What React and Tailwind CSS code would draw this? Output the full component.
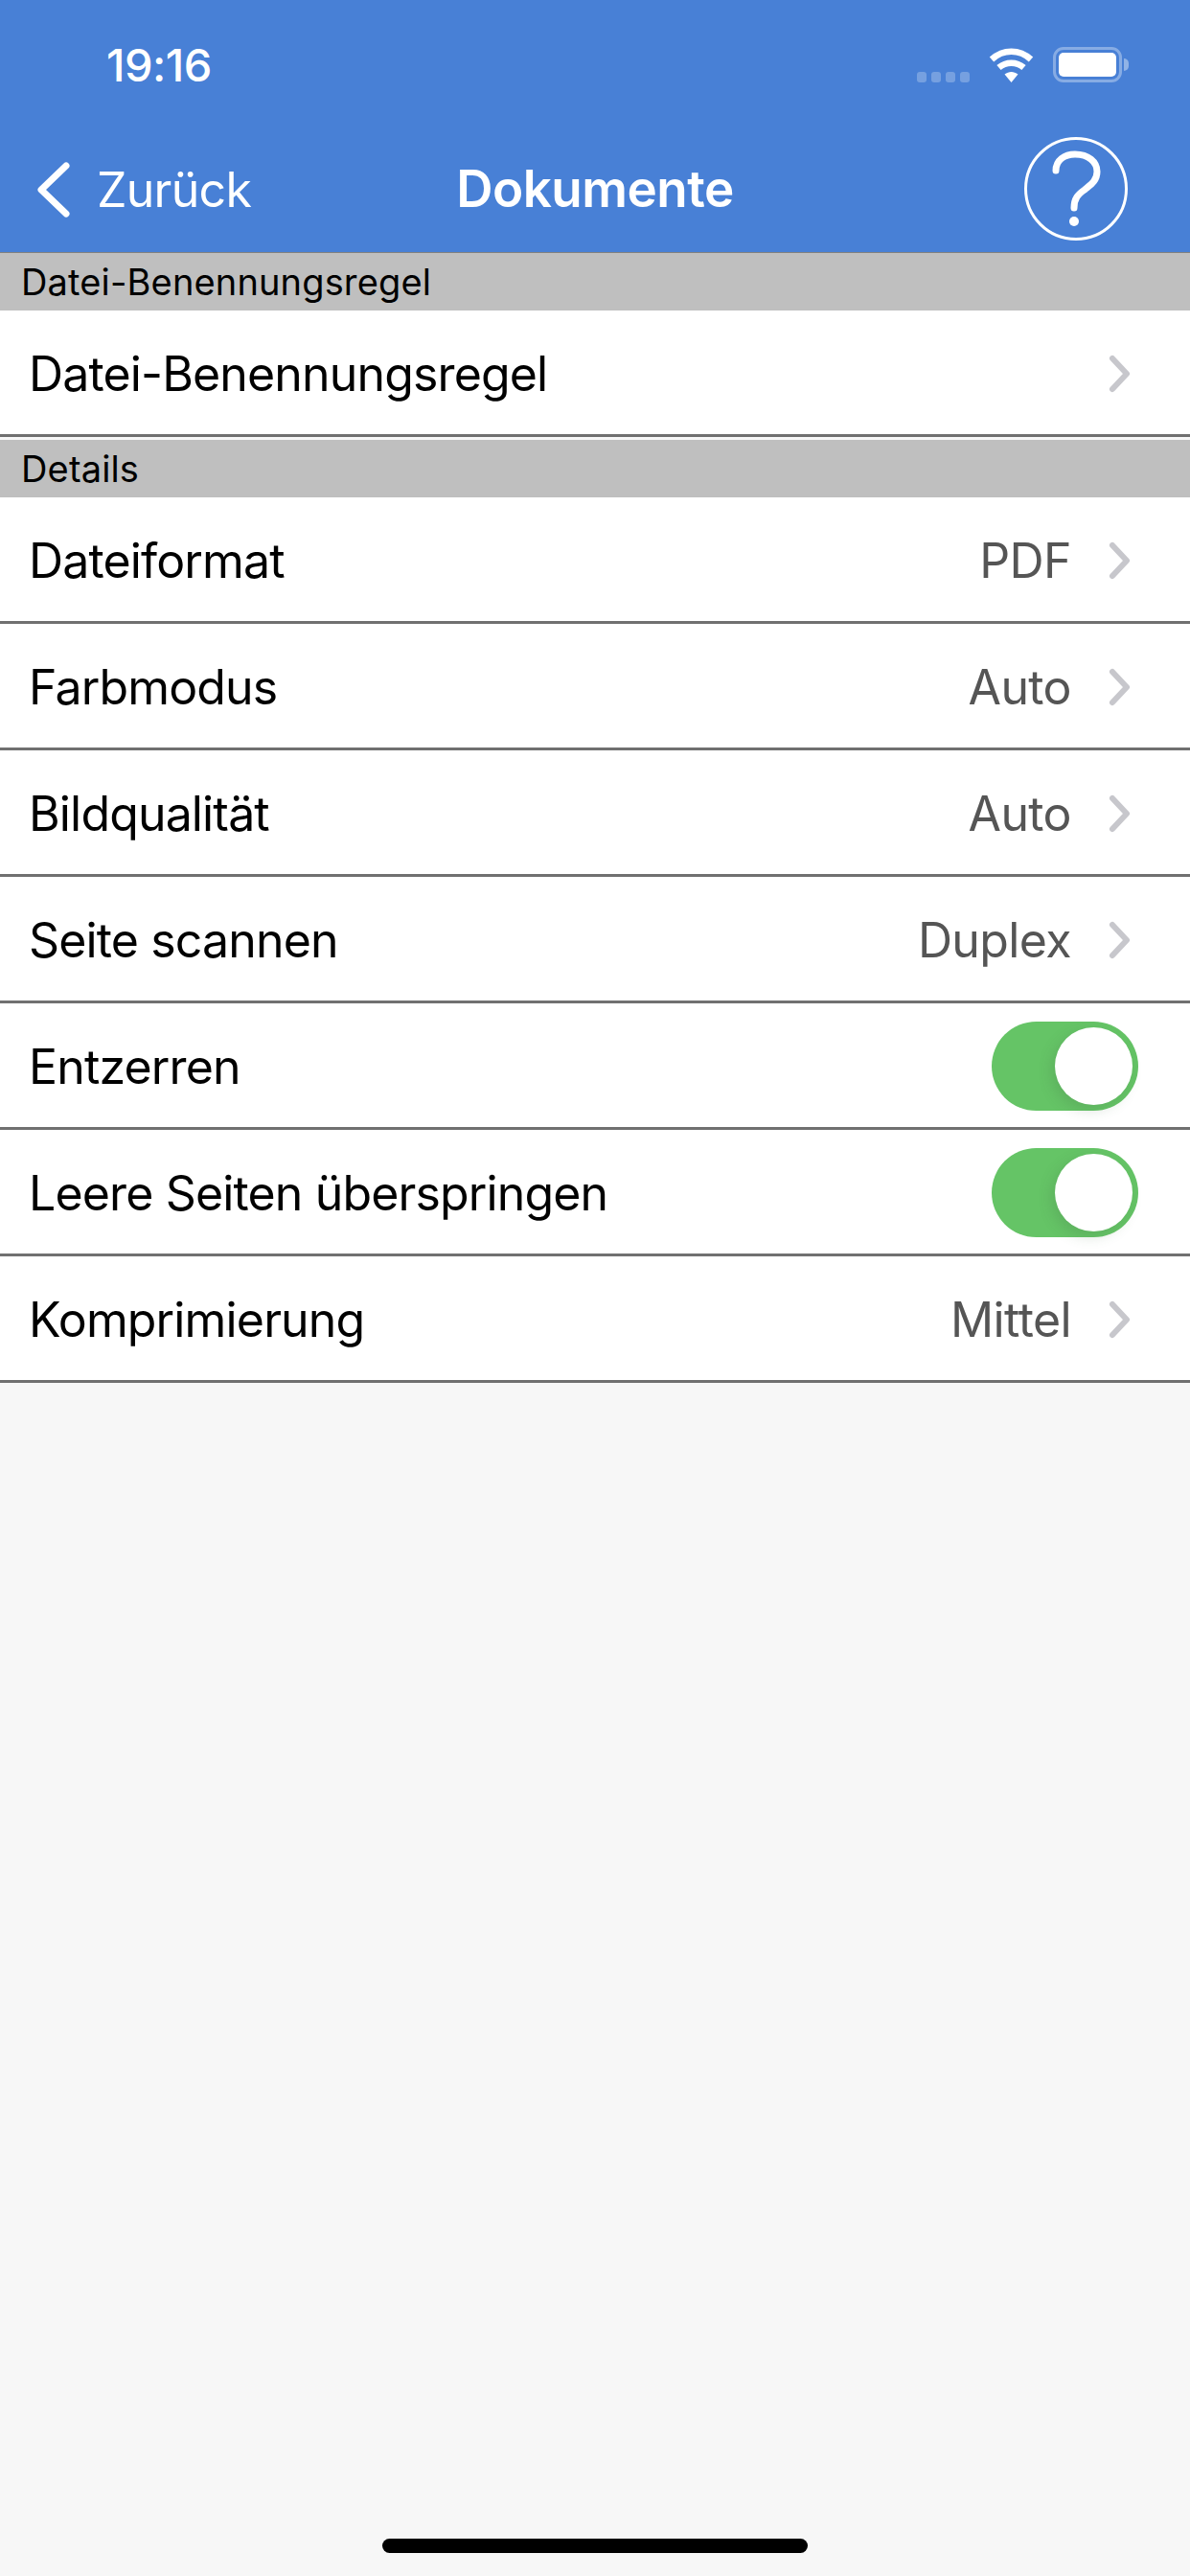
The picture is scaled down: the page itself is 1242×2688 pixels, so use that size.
const font = { fontFamily: 'Inter, "Noto Sans", sans-serif' };

const rows = [
  { label: 'Dateiformat', value: 'PDF' },
  { label: 'Farbmodus', value: 'Auto' },
  { label: 'Bildqualität', value: 'Auto' },
  { label: 'Seite scannen', value: 'Duplex' },
  { label: 'Entzerren', toggle: true },
  { label: 'Leere Seiten überspringen', toggle: true },
  { label: 'Komprimierung', value: 'Mittel' },
];

function Chevron() {
  return (
    <svg width="27" height="42" viewBox="0 0 27 42" fill="none" className="ml-[37px] mr-[60px] shrink-0">
      <path d="M6 5 L21 21 L6 37" stroke="#c7c7cc" strokeWidth="6" strokeLinecap="round" strokeLinejoin="round" />
    </svg>
  );
}

function Toggle() {
  return (
    <div className="mr-[54px] flex h-[93px] w-[153px] items-center justify-end rounded-full bg-[#65c466] pr-[6px]">
      <div className="h-[81px] w-[81px] rounded-full bg-white shadow-[-4px_5px_14px_rgba(70,110,70,0.22)]" />
    </div>
  );
}

function Row({ label, value, toggle }) {
  return (
    <div className="flex h-[132px] items-center justify-between border-b-[3px] border-[#707070] bg-white pl-[30px] pt-[2px]">
      <span className="text-[50px] leading-none tracking-[-0.85px] text-black">{label}</span>
      {toggle ? (
        <Toggle />
      ) : (
        <div className="flex items-center">
          {value && <span className="text-[50px] leading-none tracking-[-0.6px] text-[#555555]">{value}</span>}
          <Chevron />
        </div>
      )}
    </div>
  );
}

function SectionHeader({ title }) {
  return (
    <div className="flex h-[60px] items-center bg-[#bfbfbf] pl-[22px] text-[38px] leading-none tracking-[0.15px] text-black">
      {title}
    </div>
  );
}

function StatusBar() {
  return (
    <div className="flex h-[132px] items-start justify-between pl-[111px] pr-[64px] pt-[49px]">
      <span className="text-[47px] font-medium leading-[37px] tracking-[-0.5px] text-white">19:16</span>
      <div className="flex items-center">
        <div className="mr-[20px] mt-[26px] flex gap-[5px]">
          <div className="h-[11px] w-[10px] rounded-[3px] bg-white/25" />
          <div className="h-[11px] w-[10px] rounded-[3px] bg-white/25" />
          <div className="h-[11px] w-[10px] rounded-[3px] bg-white/25" />
          <div className="h-[11px] w-[10px] rounded-[3px] bg-white/25" />
        </div>
        <svg width="47" height="36" viewBox="0 0 47 36" fill="none" className="mr-[20px]">
          <path d="M3 12 C15 1 32 1 44 12" stroke="white" strokeWidth="6.5" />
          <path d="M10.5 20.5 C18 14 29 14 36.5 20.5" stroke="white" strokeWidth="6.5" />
          <path d="M16.5 27.5 L23.5 36 L30.5 27.5 C26 24 21 24 16.5 27.5 Z" fill="white" />
        </svg>
        <div className="flex h-[37px] w-[72px] items-center rounded-[11px] border-[3px] border-white/35 p-[3px]">
          <div className="h-full w-full rounded-[5px] bg-white" />
        </div>
        <div className="ml-[2px] h-[13px] w-[5px] rounded-r-full bg-white/40" />
      </div>
    </div>
  );
}

function NavBar() {
  return (
    <div className="relative flex h-[132px] items-center justify-between border-b border-[#808080] pl-[38px] pr-[66px]">
      <div className="flex items-center">
        <svg width="36" height="58" viewBox="0 0 36 58" fill="none">
          <path d="M31 4 L5 29 L31 54" stroke="white" strokeWidth="7" strokeLinecap="round" strokeLinejoin="round" />
        </svg>
        <span className="ml-[27px] text-[50px] leading-none tracking-[-0.7px] text-white">Zurück</span>
      </div>
      <span className="absolute left-0 right-0 text-center text-[53px] font-semibold leading-none tracking-[-0.5px] text-white">
        Dokumente
      </span>
      <svg width="108" height="108" viewBox="0 0 108 108" fill="none" className="-mt-[2px] -mr-[1px]">
        <circle cx="54" cy="54" r="52.5" stroke="white" strokeWidth="3" />
        <path
          d="M33 35 C33 24 42 18 53 18 C67 18 76 26 76 36 C76 46 69 50 63 55 C56 60 52 64 52 74"
          stroke="white"
          strokeWidth="7"
          strokeLinecap="round"
        />
        <circle cx="52" cy="88" r="5" fill="white" />
      </svg>
    </div>
  );
}

export default function App() {
  return (
    <div className="relative flex h-[2688px] w-[1242px] flex-col overflow-hidden bg-[#f7f7f7]" style={font}>
      <div className="bg-[#4880d6]">
        <StatusBar />
        <NavBar />
      </div>

      <SectionHeader title="Datei-Benennungsregel" />
      <Row label="Datei-Benennungsregel" />

      <div className="mt-[3px]">
        <SectionHeader title="Details" />
        {rows.map((row) => (
          <Row key={row.label} {...row} />
        ))}
      </div>

      <div className="absolute bottom-[24px] left-1/2 h-[15px] w-[444px] -translate-x-1/2 rounded-full bg-black" />
    </div>
  );
}
